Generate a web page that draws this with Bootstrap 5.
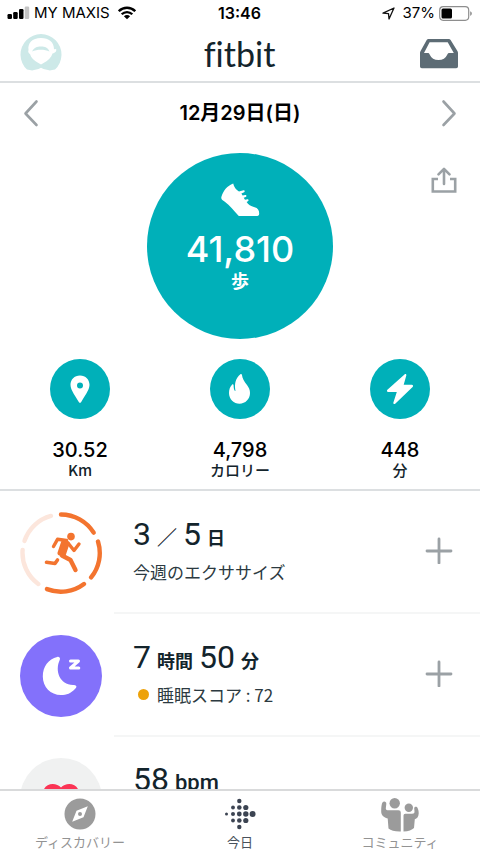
<!DOCTYPE html>
<html lang="ja">
<head>
<meta charset="utf-8">
<meta name="viewport" content="width=device-width, initial-scale=1">
<title>fitbit</title>
<link href="https://cdn.jsdelivr.net/npm/bootstrap@5.3.0/dist/css/bootstrap.min.css" rel="stylesheet">
<style>
:root{--teal:#00b0b9;--ink:#13242c;--num:Roboto,"Noto Sans CJK JP",sans-serif}
body{font-family:Inter,"Noto Sans CJK JP",sans-serif;color:#000;background:#fff}
svg{display:block;flex:none}
.status{height:26px;font-size:15px;line-height:26px;padding:0 8px 0 7px}
.status>div{flex:1 1 0}
.status .clock{font-size:16px}
.topbar{height:57px;border-bottom:2px solid #dcdfe1;padding:0 21px 0 20px}
.topbar>div{flex:1 1 0}
.brand{font-family:Lato,sans-serif;font-size:34px;line-height:44px;color:var(--ink);font-variant-ligatures:none}
.plain{background:none;border:0;padding:0;color:#9ba1a5}
.datebar{height:60px;padding:0 22px}
.datebar h1{font-size:20px;line-height:28px;font-weight:600}
.hero{padding:10px 22px 20px}
.side{width:28px;padding-top:14px}
.steps{width:186px;height:186px;background:var(--teal);color:#fff;padding-top:30px}
.steps .total{font-size:36px;line-height:40px;margin-top:12px;font-weight:500}
.steps .unit{font-size:18px;line-height:26px;font-weight:700}
.stats{border-bottom:2px solid #dcdfe1;padding-bottom:10px}
.disc{width:60px;height:60px;background:var(--teal);color:#fff}
.stats .amount{font-size:20px;line-height:22px;margin-top:20px;font-weight:500}
.stats .unit{font-family:"Noto Sans CJK JP",sans-serif;font-size:15px;line-height:18px;font-weight:500;color:var(--ink)}
.entry{padding-left:20px}
.entry .badge-art{width:82px;margin-right:12px}
.entry .body{height:123px;border-bottom:2px solid #f5f6f6;padding:0 27px 4px 19px}
.entry h2{font-family:var(--num);font-size:32px;line-height:36px;font-weight:400;color:var(--ink);gap:6px;margin-bottom:8px}
.entry h2 small{font-size:18px;line-height:24px;font-weight:700}
.entry h2 .latin{font-size:22px;font-weight:500}
.entry h2 .slash{font-size:20px;font-weight:500;line-height:24px}
.entry .partial{padding-top:24px}
.entry p{font-family:"Noto Sans CJK JP",sans-serif;font-size:17px;line-height:24px;color:#2c3a41}
.dot{width:11px;height:11px;background:#eda20a;margin:0 8px 0 5px}
.tabs{height:64px;border-top:2px solid #d9dadb;background:#fff;padding-top:7px}
.tabs a{font-family:"Noto Sans CJK JP",sans-serif;font-size:13px;line-height:20px;color:#939393}
.tabs a.active{color:#4a525c}
</style>
<script src="https://cdn.jsdelivr.net/npm/bootstrap@5.3.0/dist/js/bootstrap.bundle.min.js"></script>
</head>
<body>
<div class="d-flex flex-column vh-100 overflow-hidden">
  <div class="status d-flex align-items-center flex-shrink-0">
    <div class="d-flex align-items-center">
      <svg width="23" height="14" viewBox="0 0 23 14"><g fill="#000"><rect x="0.500" y="8" width="4.500" height="5" rx="1.200"/><rect x="6.200" y="6" width="4.500" height="7" rx="1.200"/><rect x="12" y="3" width="4.500" height="10" rx="1.200"/></g><rect x="17.700" y="0.500" width="4.500" height="12.500" rx="1.200" fill="#c4c4c4"/></svg>
      <span class="ms-1">MY MAXIS</span>
      <svg class="ms-2" width="18" height="14" viewBox="0 0 18 14"><g fill="none" stroke="#000" stroke-width="2.300"><path d="M.8 5.200C5.500.6 12.500.6 17.200 5.200"/><path d="M3.700 8.300c3-3 7.600-3 10.600 0"/></g><path d="M9 13.300 5.900 10.200c1.800-1.700 4.400-1.700 6.200 0Z"/></svg>
    </div>
    <span class="clock fw-semibold">13:46</span>
    <div class="d-flex align-items-center justify-content-end">
      <svg width="13" height="13" viewBox="0 0 13 13"><path d="M1 6.200 12 1 7 12 6.500 6.600Z" fill="none" stroke="#111" stroke-width="1.300" stroke-linejoin="round"/></svg>
      <span class="ms-2">37%</span>
      <svg class="ms-1" width="33" height="15" viewBox="0 0 33 15"><rect x=".7" y=".7" width="29" height="13.600" rx="3.500" fill="none" stroke="#8e8e8e" stroke-width="1.200"/><rect x="2.500" y="2.500" width="10.500" height="10" rx="1.500"/><path d="M31.200 5.200c2.200.8 2.200 3.800 0 4.600Z" fill="#8e8e8e"/></svg>
    </div>
  </div>

  <header class="topbar d-flex align-items-center flex-shrink-0">
    <div class="d-flex">
      <button class="plain" aria-label="プロフィール">
        <svg width="42" height="42" viewBox="0 0 42 42"><path d="M7 36.500A20.500 20.500 0 1 1 35 36.500C32 37 30 38 28 37L23.500 36 21 34.800 18.500 36 14 37C12 38 10 37 7 36.500Z" fill="#cde9e8"/><path d="M21 5C12 5 7.500 10.500 8.500 17c-.9 2 .4 3.500 1.500 4 1 4 4 6.500 8 8.800L21 31.500l3-1.700C28 27.500 31.500 24.500 32.500 20.500c3-.5 4.500-3 3.500-4.500l-2 .2C34 9 29 5 21 5Z" fill="#fff"/><path d="M12 18.500c2-4 5-5 9-5s7 1 8.500 5c-5-2.200-12.500-2.200-17.500 0Z" fill="#cde9e8"/></svg>
      </button>
    </div>
    <span class="brand">fitbit</span>
    <div class="d-flex justify-content-end">
      <button class="plain" aria-label="受信箱">
        <svg width="40" height="30" viewBox="0 0 40 30"><path fill="#5d6c75" fill-rule="evenodd" d="M9.500 0h20.300q1.200 0 1.800 1L38.400 12q.6.900.6 2V27.500Q39 29.300 37.200 29.300H2.800Q1 29.300 1 27.500V14q0-1.100.6-2L7.700 1Q8.300 0 9.500 0ZM10.600 3.200 5 14h3.600c1.400 0 1.700.6 2.200 1.700 1.400 3.300 4.500 5.300 8.700 5.300s7.300-2 8.700-5.300c.5-1.100.9-1.700 2.300-1.700h4.300L28.700 3.200Z"/></svg>
      </button>
    </div>
  </header>

  <main class="flex-grow-1 overflow-hidden">
    <div class="datebar d-flex align-items-center justify-content-between">
      <button class="plain" aria-label="前の日"><svg width="18" height="28" viewBox="0 0 18 28"><path d="M14.500 2.500 3.500 14.500l11 11.500" fill="none" stroke="currentColor" stroke-width="2.600" stroke-linecap="round" stroke-linejoin="round"/></svg></button>
      <h1 class="m-0">12月29日(日)</h1>
      <button class="plain" aria-label="次の日"><svg width="18" height="28" viewBox="0 0 18 28"><path d="m3.500 2.500 11 12-11 11.500" fill="none" stroke="currentColor" stroke-width="2.600" stroke-linecap="round" stroke-linejoin="round"/></svg></button>
    </div>

    <section class="hero d-flex justify-content-between align-items-start">
      <div class="side"></div>
      <div class="steps rounded-circle d-flex flex-column align-items-center">
        <svg width="40" height="34" viewBox="0 0 40 34"><path fill="#fff" d="M13.200.6c.8 3.400 2.800 6.600 5.800 7.800l4.500-1.200c1.200-.2 1.700 1.600.6 2l-2.700 1.200 1.200 2 2.700-.5c1.300-.1 1.600 1.700.4 2l-2 .8 1.300 2 2.500-.4c1.100 0 1.500 1.500.4 1.900l-1.300.8c1.600 2.800 4 4.200 8 5.200 3.200.8 4.600 3 4.600 6.300 0 1.600-.6 2.400-2 2.400H18.800C13.500 28 10.300 22.500 4.500 18.600 1.600 17 .8 15.700 1.500 13.500 3.500 7.500 7.200 3 13.200.6Z"/></svg>
        <div class="total">41,810</div>
        <div class="unit">歩</div>
      </div>
      <div class="side d-flex justify-content-center">
        <button class="plain" aria-label="共有"><svg width="26" height="27" viewBox="0 0 26 27"><g fill="none" stroke="currentColor" stroke-width="2.600"><path d="M7 12H1.800V24.500H24.200V12H19"/><path d="M13 17V2M7.500 7.300 13 1.800l5.500 5.500" stroke-linecap="round" stroke-linejoin="round"/></g></svg></button>
      </div>
    </section>

    <section class="stats row g-0 text-center">
      <div class="col d-flex flex-column align-items-center">
        <div class="disc rounded-circle d-flex align-items-center justify-content-center"><svg width="20" height="28" viewBox="0 0 20 28"><path fill="#fff" fill-rule="evenodd" d="M10 .5c5.600 0 9.500 4.200 9.500 9.300 0 4.200-2.700 8.300-8.300 17.200q-1.200 1.700-2.400 0C3.200 18.100.5 14 .5 9.800.5 4.700 4.400.5 10 .5ZM10 7.400a3 3 0 1 0 0 6 3 3 0 0 0 0-6Z"/></svg></div>
        <div class="amount">30.52</div><div class="unit">Km</div>
      </div>
      <div class="col d-flex flex-column align-items-center">
        <div class="disc rounded-circle d-flex align-items-center justify-content-center"><svg width="24" height="32" viewBox="0 0 24 32"><path fill="#fff" d="M12.400 1.200c.8-.5 1.300-.1 1.500.6.5 4.200 2.300 6.600 5.100 10.300 1.900 2.500 3 5 3 8 0 6-4.600 10.700-10.500 10.700C5.900 30.800 1 26.200 1 20c0-3.500 1-6.200 3-8.300.7-.7 1.600-.3 1.600.7 0 2.200.4 3.800 1.200 5.300.3.500.7.300.6-.3C6.300 10.500 7.600 5 12.400 1.200Z"/></svg></div>
        <div class="amount">4,798</div><div class="unit">カロリー</div>
      </div>
      <div class="col d-flex flex-column align-items-center">
        <div class="disc rounded-circle d-flex align-items-center justify-content-center"><svg width="28" height="32" viewBox="0 0 28 32"><path fill="#fff" d="M18.500 1.400c1-.9 2.200-.2 1.800 1.100L17.700 11.700h8c1.400 0 1.800 1.200.9 2.200L9.200 30.700c-1 .9-2.200.2-1.800-1.100L10.800 19H2.300C.9 19 .5 17.800 1.400 16.800Z"/></svg></div>
        <div class="amount">448</div><div class="unit">分</div>
      </div>
    </section>

    <section>
      <article class="entry d-flex align-items-center">
        <svg class="badge-art" width="82" height="82" viewBox="0 0 82 82">
          <g fill="none" stroke-width="4.400" stroke-linecap="round"><g stroke="#f3742f"><path d="M41 2.500A38.500 38.500 0 0 1 73.700 20.700"/><path d="M78 29.500A38.500 38.500 0 0 1 71.100 65.400"/><path d="M64 72A38.500 38.500 0 0 1 27 77.100"/></g><g stroke="#fce6dc"><path d="M31 3.900A38.500 38.500 0 0 0 4.500 28.900"/><path d="M2.600 38A38.500 38.500 0 0 0 18.300 72"/></g></g>
          <g fill="none" stroke="#f3742f" stroke-linecap="round" stroke-linejoin="round"><path d="m33.500 34.500 4-7.200 9 1.200" stroke-width="3.400"/><path d="m48 31 6 7.500 5-6.500" stroke-width="3.400"/><path d="M40 41 43.500 30.500 47 31.500 43.500 42Z" fill="#f3742f" stroke-width="5"/><path d="m42 43.500 8.500 4.500 5 10" stroke-width="4.400"/><path d="M37.500 48 35 51.500 26.500 50.200" stroke-width="3.600"/></g><circle cx="51" cy="24.600" r="3.800" fill="#f3742f"/>
        </svg>
        <div class="body flex-grow-1 d-flex align-items-center justify-content-between">
          <div>
            <h2 class="d-flex align-items-baseline">3<span class="slash">／</span>5<small>日</small></h2>
            <p class="m-0">今週のエクササイズ</p>
          </div>
          <button class="plain" aria-label="エクササイズを追加"><svg width="28" height="28" viewBox="0 0 28 28"><path d="M14 3v24M2 15h24" stroke="currentColor" stroke-width="2.800" stroke-linecap="round"/></svg></button>
        </div>
      </article>

      <article class="entry d-flex align-items-center">
        <svg class="badge-art" width="82" height="82" viewBox="0 0 82 82"><circle cx="41" cy="41" r="41" fill="#8371fb"/><path fill="#fff" d="M37.200 21.900C39.200 21.400 40.600 23 39.800 24.700 34.500 36 39.700 49.500 53 50c1.500 0 2.600.1 3.200.9.500.8 0 1.700-.8 2.500C51 58.300 46.500 60 41 60 30.500 60 22.800 52 22.800 41.500 22.800 31.500 28.500 24 37.200 21.900Z"/><path d="M50.500 26h8l-8 7h8.300" fill="none" stroke="#fff" stroke-width="3" stroke-linecap="round" stroke-linejoin="round"/></svg>
        <div class="body flex-grow-1 d-flex align-items-center justify-content-between">
          <div>
            <h2 class="d-flex align-items-baseline">7<small>時間</small>50<small>分</small></h2>
            <p class="m-0 d-flex align-items-center"><span class="dot rounded-circle"></span>睡眠スコア : 72</p>
          </div>
          <button class="plain" aria-label="睡眠を追加"><svg width="28" height="28" viewBox="0 0 28 28"><path d="M14 3v24M2 15h24" stroke="currentColor" stroke-width="2.800" stroke-linecap="round"/></svg></button>
        </div>
      </article>

      <article class="entry d-flex align-items-center">
        <svg class="badge-art" width="82" height="82" viewBox="0 0 82 82"><circle cx="41" cy="41" r="41" fill="#f0f1f1"/><path fill="#fb3455" d="M41 29.500c5-6 18-5 18 6.500C59 45 50 51 41 59 32 51 23 45 23 36c0-11.500 13-12.500 18-6.500Z"/></svg>
        <div class="body partial flex-grow-1">
          <h2 class="d-flex align-items-baseline">58<small class="latin">bpm</small></h2>
        </div>
      </article>
    </section>
  </main>

  <nav class="tabs row g-0 flex-shrink-0 text-center">
    <a href="#discover" class="col d-flex flex-column align-items-center text-decoration-none">
      <svg width="32" height="34" viewBox="0 0 32 34"><circle cx="16" cy="16" r="15.500" fill="#9b9b9b"/><path fill="#fff" fill-rule="evenodd" d="M23.800 8.200 19.500 19.300 8.200 23.800 12.500 12.700ZM16 14a2 2 0 1 0 0 4 2 2 0 0 0 0-4Z"/></svg>
      ディスカバリー</a>
    <a href="#today" class="active col d-flex flex-column align-items-center text-decoration-none" aria-current="page">
      <svg width="32" height="34" viewBox="0 0 32 34"><g fill="#3c4452"><circle cx="2.500" cy="16" r="1.500"/><circle cx="9" cy="9.500" r="1.900"/><circle cx="9" cy="16" r="2"/><circle cx="9" cy="22.500" r="1.900"/><circle cx="15.300" cy="3" r="2.200"/><circle cx="15.300" cy="9.500" r="2.300"/><circle cx="15.300" cy="16" r="2.400"/><circle cx="15.300" cy="22.500" r="2.300"/><circle cx="15.300" cy="29" r="2.200"/><circle cx="21.800" cy="9.500" r="2.600"/><circle cx="21.800" cy="16" r="2.700"/><circle cx="21.800" cy="22.500" r="2.600"/><circle cx="28.600" cy="16" r="3"/></g></svg>
      今日</a>
    <a href="#community" class="col d-flex flex-column align-items-center text-decoration-none">
      <svg width="40" height="34" viewBox="0 0 40 34"><g fill="#9b9b9b" transform="translate(0 -1)"><circle cx="14.700" cy="6.200" r="5.200"/><circle cx="28.800" cy="10.800" r="4.200"/><path d="M3.500 4.700c1.500-.5 3 .5 2.800 2.200L5.800 11.500C6 13 7 13.300 8.500 13.300H18.500Q20.800 13.300 20.800 15.600V34.500C15 34.700 11 33.500 8.500 31.500L7.700 21.500C3 20 1.200 18 1.200 14.500 1.200 10.500 1.500 8.500 2 6.500 2.200 5.500 2.700 5 3.500 4.700Z"/><path d="M23.500 34.500V18.500Q23.500 16.700 25.300 16.700H32C34 16.700 34.500 16 34.500 14.500L34.200 11.200C34.500 9.500 37 9.300 37.600 11 38.500 13 38.700 14.500 38.700 16.500 38.500 20 37 21.500 34.800 22.300L34 31C32 33 28.500 34.300 23.500 34.500Z"/></g></svg>
      コミュニティ</a>
  </nav>
</div>
</body>
</html>
